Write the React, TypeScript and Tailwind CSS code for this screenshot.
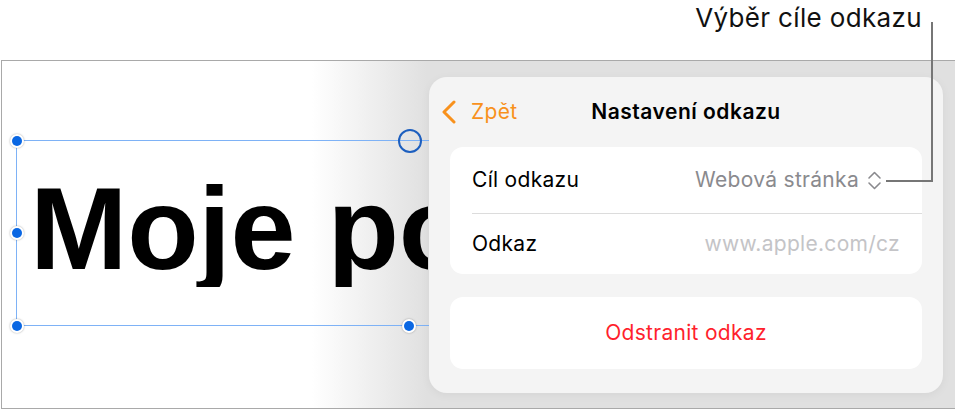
import { ReactNode } from 'react'

function Handle({ x, y }: { x: number; y: number }) {
  // filled selection dot with a white ring
  return (
    <div
      className="absolute w-[14px] h-[14px] -ml-[7px] -mt-[7px] rounded-full bg-white shadow-[0_0_2px_rgba(0,0,0,0.35)] flex items-center justify-center"
      style={{ left: x, top: y }}
    >
      <div className="w-[10px] h-[10px] rounded-full bg-[#0a67e3]" />
    </div>
  )
}

function Card({ children }: { children: ReactNode }) {
  return <div className="mx-[21px] bg-white rounded-[13px] overflow-hidden">{children}</div>
}

export default function App() {
  return (
    <div className="w-[955px] h-[410px] bg-white relative font-['Inter','Noto_Sans',sans-serif] text-black overflow-hidden">
      {/* callout label */}
      <div className="h-[60px] flex justify-end pr-[33px] pt-[2px]">
        <span className="text-[26px] leading-[32px] tracking-[0.35px] text-[#111]">Výběr cíle odkazu</span>
      </div>

      {/* canvas */}
      <div className="ml-px h-[349px] border-t border-l border-b border-[#a9a9a9] relative overflow-hidden bg-[linear-gradient(to_right,#ffffff_310px,#e0e0e0_425px)]">
        {/* selection box */}
        <div className="absolute left-[14px] top-[79px] w-[500px] h-[186px] border border-[#7eb2f6]" />
        <div className="absolute left-[28px] top-[109px] w-[398px] overflow-hidden font-['Liberation_Sans',Arial,sans-serif] font-bold text-[117px] leading-none tracking-[-0.3px] whitespace-nowrap">
          Moje po
        </div>
        <Handle x={15} y={80} />
        <Handle x={15} y={172} />
        <Handle x={15} y={265} />
        <Handle x={407} y={265} />
        <div className="absolute left-[396px] top-[68px] w-[24px] h-[24px] rounded-full border-2 border-[#1d5fbf]" />

        {/* link settings popover */}
        <div className="absolute left-[427px] top-[16px] w-[514px] h-[316px] rounded-[18px] bg-[#f4f4f4] shadow-[0_2px_10px_rgba(0,0,0,0.05)] flex flex-col">
          <div className="h-[70px] relative flex items-center justify-center">
            <div className="absolute left-[12px] top-0 h-full flex items-center gap-[14px] text-[#f8911c]">
              <svg width="16" height="24" viewBox="0 0 16 24" fill="none">
                <path d="M13 2 L3 12 L13 22" stroke="#f8911c" strokeWidth="3" strokeLinecap="round" strokeLinejoin="round" />
              </svg>
              <span className="text-[21px] tracking-[0.3px]">Zpět</span>
            </div>
            <span className="text-[21px] font-semibold tracking-[0.5px]">Nastavení odkazu</span>
          </div>

          <Card>
            <div className="h-[66px] flex items-center justify-between pl-[22px] pr-[40px]">
              <span className="text-[21px] tracking-[0.3px]">Cíl odkazu</span>
              <span className="flex items-center gap-[8px] text-[21px] tracking-[0.3px] text-[#8a8a8e]">
                Webová stránka
                <svg width="15" height="19" viewBox="0 0 15 19" fill="none">
                  <path d="M2 7 L7.5 1.5 L13 7 M2 12 L7.5 17.5 L13 12" stroke="#8a8a8e" strokeWidth="1.6" strokeLinecap="round" strokeLinejoin="round" />
                </svg>
              </span>
            </div>
            <div className="ml-[22px] h-px bg-[#dcdcdc]" />
            <div className="h-[60px] flex items-center justify-between pl-[22px] pr-[22px]">
              <span className="text-[21px] tracking-[0.3px]">Odkaz</span>
              <span className="text-[21px] tracking-[0.3px] text-[#c4c4c7]">www.apple.com/cz</span>
            </div>
          </Card>

          <div className="h-[23px]" />

          <Card>
            <div className="h-[72px] flex items-center justify-center text-[21px] tracking-[0.3px] text-[#ff1f2d]">Odstranit odkaz</div>
          </Card>
        </div>
      </div>

      {/* callout line */}
      <svg className="absolute left-0 top-0 pointer-events-none" width="955" height="410">
        <path d="M932 22 V181 H886" stroke="#767676" strokeWidth="2" fill="none" />
      </svg>
    </div>
  )
}
